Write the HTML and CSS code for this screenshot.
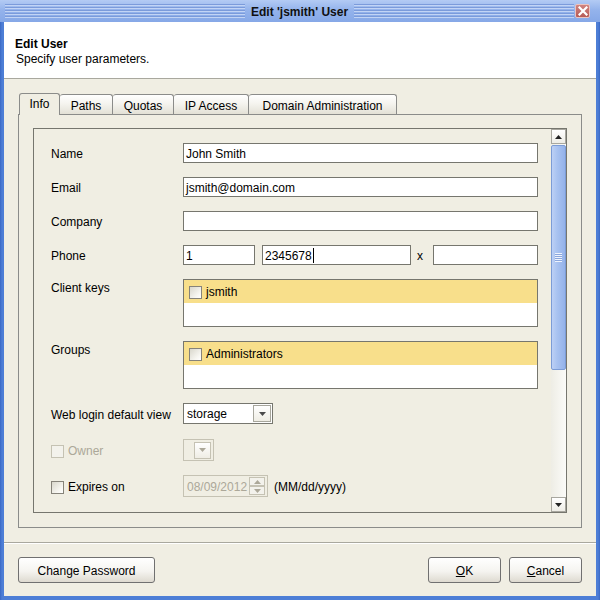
FILE: index.html
```html
<!DOCTYPE html>
<html>
<head>
<meta charset="utf-8">
<link rel="stylesheet" href="styles.css">
</head>
<body>
<div class="window">
  <div class="titlebar">
    <div class="stripes left"></div>
    <div class="title">Edit 'jsmith' User</div>
    <div class="stripes right"></div>
    <div class="close"><svg width="10" height="10" viewBox="0 0 10 10"><path d="M1.5 1.5L8.5 8.5M8.5 1.5L1.5 8.5" stroke="#fff" stroke-width="2.2" stroke-linecap="square"/></svg></div>
  </div>
  <div class="frame">
    <div class="header">
      <div class="h-title">Edit User</div>
      <div class="h-sub">Specify user parameters.</div>
    </div>
    <div class="body">
      <div class="tabs">
        <div class="tab active w-info">Info</div>
        <div class="tab w-paths">Paths</div>
        <div class="tab w-quotas">Quotas</div>
        <div class="tab w-ip">IP Access</div>
        <div class="tab w-domain">Domain Administration</div>
      </div>
      <div class="panel">
        <div class="scrollpane">
          <div class="form">
            <div class="row r-gap">
              <div class="lbl">Name</div>
              <div class="input">John Smith</div>
            </div>
            <div class="row r-gap">
              <div class="lbl">Email</div>
              <div class="input">jsmith@domain.com</div>
            </div>
            <div class="row r-gap">
              <div class="lbl">Company</div>
              <div class="input"></div>
            </div>
            <div class="row r-gap">
              <div class="lbl">Phone</div>
              <div class="phone">
                <div class="input p1">1</div>
                <div class="input p2">2345678<span class="caret"></span></div>
                <div class="px">x</div>
                <div class="input p3"></div>
              </div>
            </div>
            <div class="row r-gap top">
              <div class="lbl lbl-top">Client keys</div>
              <div class="list">
                <div class="list-item"><span class="cb"></span>jsmith</div>
              </div>
            </div>
            <div class="row r-gap top">
              <div class="lbl lbl-top">Groups</div>
              <div class="list">
                <div class="list-item"><span class="cb"></span>Administrators</div>
              </div>
            </div>
            <div class="row r-gap15">
              <div class="lbl">Web login default view</div>
              <div class="combo">
                <div class="combo-text">storage</div>
                <div class="combo-btn"><svg width="7" height="4" viewBox="0 0 7 4"><path d="M0 0H7L3.5 4Z" fill="#4a4a4a"/></svg></div>
              </div>
            </div>
            <div class="row r-gap">
              <div class="lbl check disabled"><span class="cb cb-dis"></span>Owner</div>
              <div class="combo combo-dis">
                <div class="combo-text"></div>
                <div class="combo-btn"><svg width="7" height="4" viewBox="0 0 7 4"><path d="M0 0H7L3.5 4Z" fill="#aca899"/></svg></div>
              </div>
            </div>
            <div class="row">
              <div class="lbl check"><span class="cb"></span>Expires on</div>
              <div class="date-row">
                <div class="spinner">
                  <div class="spin-text">08/09/2012</div>
                  <div class="spin-btns">
                    <div class="spin-btn"><svg width="7" height="4" viewBox="0 0 7 4"><path d="M0 4H7L3.5 0Z" fill="#aca899"/></svg></div>
                    <div class="spin-btn"><svg width="7" height="4" viewBox="0 0 7 4"><path d="M0 0H7L3.5 4Z" fill="#aca899"/></svg></div>
                  </div>
                </div>
                <div class="fmt">(MM/dd/yyyy)</div>
              </div>
            </div>
          </div>
          <div class="scrollbar">
            <div class="sb-btn"><svg width="7" height="4" viewBox="0 0 7 4"><path d="M0 4H7L3.5 0Z" fill="#222"/></svg></div>
            <div class="sb-thumb"><div class="grip"></div></div>
            <div class="sb-track"></div>
            <div class="sb-btn"><svg width="7" height="4" viewBox="0 0 7 4"><path d="M0 0H7L3.5 4Z" fill="#222"/></svg></div>
          </div>
        </div>
      </div>
      <div class="sep"></div>
      <div class="buttons">
        <div class="btn w-change">Change Password</div>
        <div class="spacer"></div>
        <div class="btn w-ok"><u>O</u>K</div>
        <div class="btn w-cancel"><u>C</u>ancel</div>
      </div>
    </div>
  </div>
</div>
</body>
</html>
```
FILE: styles.css
```css
* { box-sizing: border-box; }
body {
  margin: 0;
  font-family: "Liberation Sans", Arial, sans-serif;
  font-size: 12px;
  color: #000;
}
.window {
  width: 600px;
  height: 600px;
  display: flex;
  flex-direction: column;
  background: linear-gradient(to right, #3A68C4, #4D7ED6 2px, #4D7ED6 calc(100% - 2px), #3A68C4);
}
.titlebar {
  height: 22px;
  flex: none;
  display: flex;
  align-items: center;
  padding: 0 10px 0 5px;
  background: linear-gradient(#B3CBF4, #94B3EC 45%, #86A8E7);
}
.stripes {
  height: 14px;
  background: repeating-linear-gradient(to bottom, #7B9BDB 0 1px, #C2D4F5 1px 2px, transparent 2px 3px);
}
.stripes.left { width: 240px; }
.stripes.right { flex: 1; }
.title {
  font-weight: bold;
  padding: 1px 6px 0;
  color: #101010;
  white-space: nowrap;
}
.close {
  width: 15px;
  height: 14px;
  margin-left: 1px;
  background: linear-gradient(#D08480, #B65A55);
  border: 1px solid #EBC2BE;
  border-radius: 2px;
  display: flex;
  align-items: center;
  justify-content: center;
}
.frame {
  flex: 1;
  display: flex;
  flex-direction: column;
  margin: 0 4px 4px;
  background: #F0EEE3;
}
.header {
  height: 57px;
  flex: none;
  background: #fff;
  border-bottom: 1px solid #A9A89E;
  padding: 15px 11px 0;
}
.h-title { font-weight: bold; line-height: 15px; }
.h-sub { line-height: 15px; padding-left: 1px; }
.body {
  flex: 1;
  padding: 14px 14px 0;
  display: flex;
  flex-direction: column;
}
.tabs {
  height: 21px;
  flex: none;
  display: flex;
  align-items: flex-end;
  padding-left: 1px;
}
.tab {
  height: 20px;
  border: 1px solid #8B8C8A;
  border-bottom: none;
  border-left: none;
  border-radius: 3px 3px 0 0;
  background: linear-gradient(#FFFFFF, #F5F4EF 45%, #E3E1D6);
  display: flex;
  align-items: center;
  justify-content: center;
  line-height: 14px;
  padding-top: 2px;
  white-space: nowrap;
}
.tab.active {
  height: 22px;
  margin-bottom: -1px;
  border-left: 1px solid #8B8C8A;
  background: #F0EEE3;
  position: relative;
  z-index: 1;
  padding-top: 0;
  padding-bottom: 2px;
}
.w-info { width: 41px; }
.w-paths { width: 53px; }
.w-quotas { width: 61px; }
.w-ip { width: 75px; }
.w-domain { width: 148px; }
.panel {
  height: 414px;
  flex: none;
  border: 1px solid #8B8C8A;
  padding: 13px 14px 14px;
}
.scrollpane {
  height: 385px;
  border: 1px solid #76766E;
  display: flex;
}
.form {
  flex: 1;
  padding: 14px 13px 0 17px;
}
.row {
  display: grid;
  grid-template-columns: 132px 1fr;
  align-items: center;
}
.row.top { align-items: start; }
.r-gap { margin-bottom: 14px; }
.r-gap15 { margin-bottom: 15px; }
.lbl { line-height: 14px; white-space: nowrap; padding-top: 2px; }
.lbl-top { margin-top: 0; }
.input {
  height: 20px;
  border: 1px solid #76766E;
  background: #fff;
  padding: 1px 2px 0;
  display: flex;
  align-items: center;
  white-space: nowrap;
}
.caret {
  display: inline-block;
  width: 1px;
  height: 15px;
  background: #000;
  margin-left: 1px;
}
.phone { display: flex; align-items: center; }
.p1 { width: 72px; }
.p2 { width: 149px; margin-left: 7px; }
.px { margin-left: 6px; width: 8px; padding-top: 2px; }
.p3 { flex: 1; margin-left: 8px; }
.list {
  height: 48px;
  border: 1px solid #76766E;
  background: #fff;
}
.list-item {
  height: 23px;
  background: #F8DF8B;
  display: flex;
  align-items: center;
  padding-left: 5px;
  padding-top: 1px;
}
.cb {
  display: inline-block;
  flex: none;
  width: 13px;
  height: 13px;
  border: 1px solid #86837A;
  background: linear-gradient(135deg, #D9D7CC, #F7F6F1 70%, #FFFFFF);
  margin-right: 4px;
}
.check { display: flex; align-items: center; }
.check .cb { margin-right: 4px; }
.disabled { color: #ACA899; }
.cb-dis {
  border-color: #C5C2B3;
  background: #F3F2EC;
}
.combo {
  width: 90px;
  height: 21px;
  border: 1px solid #76766E;
  background: #fff;
  display: flex;
  align-items: center;
  padding: 1px;
}
.combo-text { flex: 1; padding-left: 2px; padding-top: 1px; }
.combo-btn {
  width: 18px;
  height: 17px;
  border: 1px solid #A7A69C;
  background: linear-gradient(#FFFFFF, #EFEDE4);
  display: flex;
  align-items: center;
  justify-content: center;
}
.combo-dis {
  width: 31px;
  height: 22px;
  border-color: #C5C2B3;
  background: #F0EEE3;
}
.combo-dis .combo-btn {
  width: 17px;
  height: 17px;
  border-color: #C5C2B3;
  margin-right: 1px;
}
.date-row { display: flex; align-items: center; }
.spinner {
  width: 85px;
  height: 22px;
  border: 1px solid #C5C2B3;
  background: #F0EEE3;
  display: flex;
  align-items: center;
  padding: 1px;
}
.spin-text { flex: 1; padding-left: 2px; padding-top: 1px; color: #ACA899; }
.spin-btns {
  width: 16px;
  height: 18px;
  display: flex;
  flex-direction: column;
  margin-right: 1px;
}
.spin-btn {
  flex: 1;
  border: 1px solid #C5C2B3;
  background: #F3F2EC;
  display: flex;
  align-items: center;
  justify-content: center;
}
.fmt { margin-left: 6px; white-space: nowrap; padding-top: 1px; }
.scrollbar {
  width: 15px;
  flex: none;
  display: flex;
  flex-direction: column;
  background: linear-gradient(to right, #EEEDE5, #FBFBF8);
}
.sb-btn {
  height: 15px;
  flex: none;
  border: 1px solid #A8A79F;
  background: linear-gradient(#FFFFFF, #EEEDE6);
  display: flex;
  align-items: center;
  justify-content: center;
}
.sb-thumb {
  height: 225px;
  flex: none;
  margin-top: 1px;
  border: 1px solid #7C9CD6;
  border-radius: 2px;
  background: linear-gradient(to right, #BCD0F5, #A8C2F0 40%, #94B2EA);
  display: flex;
  align-items: center;
  justify-content: center;
}
.grip {
  width: 7px;
  height: 9px;
  background: repeating-linear-gradient(to bottom, #EEF3FD 0 1px, #8AA6DC 1px 2px);
}
.sb-track { flex: 1; }
.sep {
  flex: none;
  height: 2px;
  margin: 14px -14px 0;
  border-top: 1px solid #A9A89E;
  border-bottom: 1px solid #FFFFFF;
}
.buttons {
  display: flex;
  margin-top: 13px;
  gap: 8px;
}
.spacer { flex: 1; }
.btn {
  height: 26px;
  border: 1px solid #707070;
  border-radius: 3px;
  background: linear-gradient(#FFFFFF, #F5F4F0 55%, #DEDAD0);
  display: flex;
  align-items: center;
  justify-content: center;
  padding-top: 1px;
  white-space: nowrap;
}
.w-change { width: 137px; }
.w-ok { width: 73px; }
.w-cancel { width: 73px; }
```
